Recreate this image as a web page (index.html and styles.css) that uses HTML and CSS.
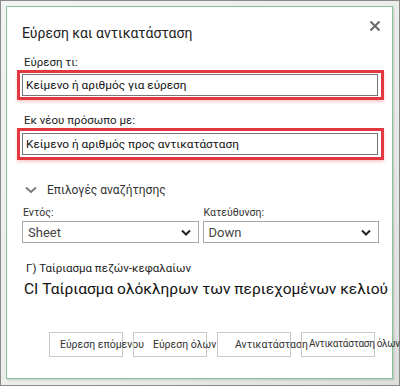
FILE: index.html
```html
<!DOCTYPE html>
<html lang="el">
<head>
<meta charset="utf-8">
<link rel="stylesheet" href="styles.css">
</head>
<body>
<div class="frame">
  <div class="dialog">
    <div class="titlebar">
      <div class="title">Εύρεση και αντικατάσταση</div>
      <svg class="close" width="12" height="12" viewBox="0 0 12 12"><path d="M1.5 1.5 L10.5 10.5 M10.5 1.5 L1.5 10.5" stroke="#6b6b6b" stroke-width="2" fill="none"/></svg>
    </div>
    <div class="label l1">Εύρεση τι:</div>
    <div class="hl"><div class="input">Κείμενο ή αριθμός για εύρεση</div></div>
    <div class="label l2">Εκ νέου πρόσωπο με:</div>
    <div class="hl hl2"><div class="input">Κείμενο ή αριθμός προς αντικατάσταση</div></div>
    <div class="options">
      <svg class="chev" width="12" height="8" viewBox="0 0 12 8"><path d="M1 1.5 L6 6 L11 1.5" stroke="#7a7a7a" stroke-width="2" fill="none"/></svg>
      <span>Επιλογές αναζήτησης</span>
    </div>
    <div class="selects">
      <div class="field">
        <div class="slabel">Εντός:</div>
        <div class="select"><span>Sheet</span><svg width="10" height="7" viewBox="0 0 10 7"><path d="M1 1.5 L5 5.5 L9 1.5" stroke="#222" stroke-width="2" fill="none"/></svg></div>
      </div>
      <div class="field">
        <div class="slabel">Κατεύθυνση:</div>
        <div class="select"><span>Down</span><svg width="10" height="7" viewBox="0 0 10 7"><path d="M1 1.5 L5 5.5 L9 1.5" stroke="#222" stroke-width="2" fill="none"/></svg></div>
      </div>
    </div>
    <div class="check1">Γ) Ταίριασμα πεζών-κεφαλαίων</div>
    <div class="check2">CI Ταίριασμα ολόκληρων των περιεχομένων κελιού</div>
    <div class="buttons">
      <div class="btn b1"><span>Εύρεση επόμενου</span></div>
      <div class="btn b2"><span>Εύρεση όλων</span></div>
      <div class="btn b3"><span>Αντικατάσταση</span></div>
      <div class="btn b4"><span>Αντικατάσταση όλων</span></div>
    </div>
  </div>
</div>
</body>
</html>
```

FILE: styles.css
```css
html, body {
  margin: 0;
  padding: 0;
  background: #ffffff;
}
body {
  font-family: Roboto, "Noto Sans", "DejaVu Sans", sans-serif;
  color: #222;
}
.frame {
  width: 400px;
  height: 386px;
  box-sizing: border-box;
  border: 1px solid #8a8a8a;
  background: linear-gradient(135deg, #f1f4f2 0%, #e9ece9 60%, #dcdfdc 100%);
  padding: 5px 6px 6px 5px;
}
.dialog {
  width: 100%;
  height: 100%;
  box-sizing: border-box;
  background: #fff;
  border: 1px solid #86c39a;
  padding: 0 8px 0 10px;
  display: flex;
  flex-direction: column;
  box-shadow: 1px 1px 2px rgba(0,0,0,0.15);
}
.titlebar {
  display: flex;
  justify-content: space-between;
  align-items: flex-start;
  height: 47px;
  padding-left: 5px;
  padding-right: 3px;
}
.title {
  font-size: 14px;
  line-height: 20px;
  margin-top: 16px;
  color: #222;
}
.close {
  margin-top: 13px;
}
.label {
  font-size: 11.5px;
  line-height: 14px;
  padding-left: 7px;
  color: #222;
}
.l1 { margin-top: 1px; }
.l2 { margin-top: 13px; }
.hl {
  border: 3px solid #e2383f;
  padding: 1px 3px 1px 2px;
  box-shadow: 0 2px 3px rgba(226,56,63,0.25);
  margin-top: 1px;
}
.hl2 { padding-top: 2px; padding-bottom: 2px; }
.input {
  border: 1px solid #767676;
  height: 20px;
  line-height: 20px;
  font-size: 11.8px;
  padding-left: 3px;
  color: #111;
}
.options {
  display: flex;
  align-items: center;
  margin-top: 21px;
  padding-left: 8px;
  font-size: 12px;
  line-height: 18px;
  color: #333;
}
.chev { margin-right: 10px; }
.selects {
  display: flex;
  gap: 4px;
  margin-top: 7px;
  padding-left: 5px;
  padding-right: 5px;
}
.field { flex: 1; }
.slabel {
  font-size: 10.5px;
  line-height: 14px;
  color: #333;
  padding-left: 1px;
}
.select {
  height: 20px;
  border: 1px solid #a7a7a7;
  display: flex;
  align-items: center;
  justify-content: space-between;
  padding: 0 7px 0 5px;
  font-size: 13px;
  color: #444;
  margin-top: 1px;
}
.check1 {
  margin-top: 17px;
  padding-left: 9px;
  font-size: 11.5px;
  line-height: 16px;
  color: #222;
}
.check2 {
  margin-top: 3px;
  padding-left: 7px;
  font-size: 15.5px;
  line-height: 20px;
  color: #111;
  white-space: nowrap;
}
.buttons {
  display: flex;
  margin-top: 33px;
  padding-left: 32px;
  gap: 10px;
}
.btn {
  width: 74px;
  height: 25px;
  box-sizing: border-box;
  border: 1px solid #c9c9c9;
  background: transparent;
  font-size: 10.5px;
  color: #333;
  position: relative;
  white-space: nowrap;
}
.btn span {
  position: absolute;
  top: 5px;
}
.b1 span { left: 10px; }
.b2 span { left: 19px; }
.b3 span { left: 17px; }
.b4 span { left: 7px; font-size: 10px; letter-spacing: -0.3px; }
```
